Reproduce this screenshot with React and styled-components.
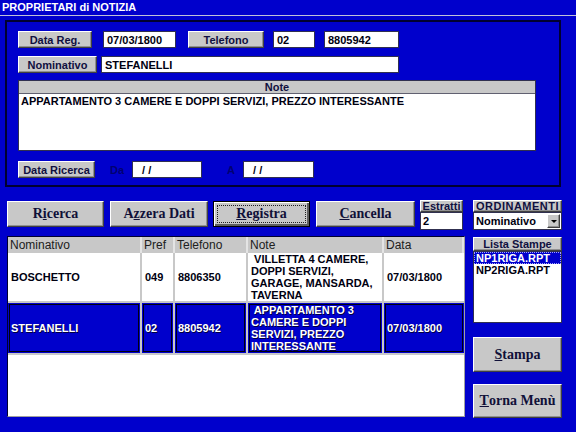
import styled, { createGlobalStyle, css } from "styled-components";

const BLUE = "#0000cc";
const GREY = "#c8c8c8";

const GlobalStyle = createGlobalStyle`
  html, body {
    margin: 0;
    padding: 0;
    background: ${BLUE};
  }
  body {
    width: 576px;
    height: 432px;
    overflow: hidden;
    font-family: "Liberation Sans", Arial, sans-serif;
  }
`;

const raised = css`
  border: 1px solid;
  border-color: #ffffff #404040 #404040 #ffffff;
  box-shadow: inset -1px -1px 0 #909090;
  background: ${GREY};
`;

const Window = styled.div`
  width: 576px;
  height: 432px;
  background: ${BLUE};
  display: flex;
  flex-direction: column;
`;

const TitleBar = styled.div`
  height: 15px;
  line-height: 15px;
  border-bottom: 1px solid #c0c0d8;
  padding-left: 2px;
  color: #ffffff;
  font-size: 11px;
  font-weight: bold;
`;

const Panel = styled.div`
  margin: 4px 0 0 5px;
  width: 556px;
  height: 167px;
  box-sizing: border-box;
  border: 2px solid #000030;
  padding: 9px 0 0 11px;
  display: flex;
  flex-direction: column;
`;

const Row = styled.div`
  display: flex;
  align-items: center;
  gap: ${(p) => p.$gap || 0}px;
  margin-top: ${(p) => p.$mt || 0}px;
`;

const LabelBox = styled.div`
  ${raised};
  box-sizing: border-box;
  width: ${(p) => p.$w}px;
  height: 17px;
  margin-left: ${(p) => p.$ml || 0}px;
  display: flex;
  align-items: center;
  justify-content: center;
  font-size: 11px;
  font-weight: bold;
  color: #101040;
  flex-shrink: 0;
`;

const Field = styled.div`
  box-sizing: border-box;
  width: ${(p) => p.$w}px;
  height: 17px;
  margin-left: ${(p) => p.$ml || 0}px;
  background: #ffffff;
  border: 1px solid #303050;
  padding-left: 3px;
  display: flex;
  align-items: center;
  font-size: 11px;
  font-weight: bold;
  color: #000010;
  white-space: pre;
  flex-shrink: 0;
`;

const Caption = styled.div`
  box-sizing: border-box;
  width: ${(p) => p.$w}px;
  padding-left: ${(p) => p.$pl}px;
  font-size: 11px;
  font-weight: bold;
  color: #000070;
`;

const NoteBox = styled.div`
  margin-top: 7px;
  width: 518px;
  height: 71px;
  box-sizing: border-box;
  background: #ffffff;
  border: 1px solid #303050;
  display: flex;
  flex-direction: column;
`;

const NoteHead = styled.div`
  height: 12px;
  line-height: 12px;
  background: ${GREY};
  border-bottom: 1px solid #606070;
  text-align: center;
  font-size: 11px;
  font-weight: bold;
  color: #101040;
`;

const NoteText = styled.div`
  padding: 1px 2px;
  font-size: 11px;
  font-weight: bold;
  color: #000010;
`;

const Main = styled.div`
  display: flex;
  gap: 8px;
  margin-top: 13px;
  padding-left: 7px;
`;

const LeftCol = styled.div`
  width: 458px;
  display: flex;
  flex-direction: column;
`;

const RightCol = styled.div`
  width: 89px;
  display: flex;
  flex-direction: column;
`;

const ButtonRow = styled.div`
  display: flex;
  align-items: flex-start;
  height: 29px;
`;

const Button = styled.div`
  ${raised};
  box-sizing: border-box;
  width: ${(p) => p.$w}px;
  height: ${(p) => p.$h || 26}px;
  margin-left: ${(p) => p.$ml || 0}px;
  margin-top: ${(p) => p.$mt || 0}px;
  display: flex;
  align-items: center;
  justify-content: center;
  font-family: "Liberation Serif", "Times New Roman", serif;
  font-size: 14px;
  font-weight: bold;
  color: #101038;
  position: relative;
  ${(p) =>
    p.$focused &&
    css`
      border-color: #000000;
      box-shadow: inset 1px 1px 0 #ffffff, inset -2px -2px 0 #606060;
      &::after {
        content: "";
        position: absolute;
        inset: 3px;
        border: 1px dotted #202020;
      }
    `}
`;

const Group = styled.div`
  width: ${(p) => p.$w}px;
  margin-left: ${(p) => p.$ml || 0}px;
  display: flex;
  flex-direction: column;
`;

const GroupHead = styled.div`
  ${raised};
  box-sizing: border-box;
  height: ${(p) => p.$h || 12}px;
  margin-top: ${(p) => p.$mt || 0}px;
  display: flex;
  align-items: center;
  justify-content: center;
  font-size: 11px;
  font-weight: bold;
  color: #101040;
  letter-spacing: ${(p) => p.$ls || 0}px;
`;

const SmallInput = styled.div`
  box-sizing: border-box;
  height: 18px;
  background: #ffffff;
  border: 1px solid #303050;
  padding-left: 2px;
  display: flex;
  align-items: center;
  justify-content: space-between;
  font-size: 11px;
  font-weight: bold;
  color: #000010;
`;

const DropButton = styled.div`
  ${raised};
  box-sizing: border-box;
  width: 13px;
  height: 14px;
  margin-right: 1px;
  display: flex;
  align-items: center;
  justify-content: center;

  &::before {
    content: "";
    border-left: 3px solid transparent;
    border-right: 3px solid transparent;
    border-top: 3px solid #000000;
  }
`;

const Table = styled.div`
  margin-top: 7px;
  height: 181px;
  box-sizing: border-box;
  background: #ffffff;
  border: 1px solid;
  border-color: #000030 #a0a0a0 #a0a0a0 #000030;
  display: grid;
  grid-template-columns: 134px 33px 73px 136px 80px;
  grid-template-rows: 16px 50px 52px;
  align-content: start;
`;

const HeadCell = styled.div`
  background: ${GREY};
  border-right: 2px solid #e4e4e4;
  display: flex;
  align-items: center;
  padding-left: 2px;
  font-size: 12px;
  color: #202020;
  &:last-child {
    border-right: none;
  }
`;

const Cell = styled.div`
  box-sizing: border-box;
  border-right: 2px solid ${GREY};
  border-bottom: 2px solid ${GREY};
  display: flex;
  align-items: center;
  padding-left: 3px;
  font-size: 11px;
  font-weight: bold;
  line-height: 12px;
  white-space: pre;
  color: ${(p) => (p.$selected ? "#ffffff" : "#000010")};
  background: ${(p) => (p.$selected ? BLUE : "#ffffff")};
  box-shadow: ${(p) =>
    p.$selected ? `inset 0 0 0 1px ${BLUE}, inset 0 0 0 2px #000010` : "none"};
  text-shadow: ${(p) => (p.$selected ? "1px 1px 0 #000040" : "none")};
  &:nth-child(5n) {
    border-right: none;
  }
`;

const ListBox = styled.div`
  height: 72px;
  box-sizing: border-box;
  background: #ffffff;
  border: 1px solid #303050;
  display: flex;
  flex-direction: column;
`;

const ListItem = styled.div`
  height: 12px;
  line-height: 12px;
  padding-left: 2px;
  font-size: 11px;
  font-weight: bold;
  color: ${(p) => (p.$selected ? "#ffffff" : "#000010")};
  background: ${(p) => (p.$selected ? BLUE : "transparent")};
  outline: ${(p) => (p.$selected ? "1px dotted #a0a0ff" : "none")};
  outline-offset: -1px;
`;

const rows = [
  {
    nome: "BOSCHETTO",
    pref: "049",
    tel: "8806350",
    note: [" VILLETTA 4 CAMERE,", "DOPPI SERVIZI,", "GARAGE, MANSARDA,", "TAVERNA"],
    data: "07/03/1800",
  },
  {
    nome: "STEFANELLI",
    pref: "02",
    tel: "8805942",
    note: [" APPARTAMENTO 3", "CAMERE E DOPPI", "SERVIZI, PREZZO", "INTERESSANTE"],
    data: "07/03/1800",
    selected: true,
  },
];

const App = () => {
  return (
    <Window>
      <GlobalStyle />
      <TitleBar>PROPRIETARI di NOTIZIA</TitleBar>
      <Panel>
        <Row>
          <LabelBox $w={74}>Data Reg.</LabelBox>
          <Field $w={73} $ml={11}>07/03/1800</Field>
          <LabelBox $w={76} $ml={12}>Telefono</LabelBox>
          <Field $w={42} $ml={9}>02</Field>
          <Field $w={75} $ml={9}>8805942</Field>
        </Row>
        <Row $mt={8}>
          <LabelBox $w={79}>Nominativo</LabelBox>
          <Field $w={298} $ml={4}>STEFANELLI</Field>
        </Row>
        <NoteBox>
          <NoteHead>Note</NoteHead>
          <NoteText>APPARTAMENTO 3 CAMERE E DOPPI SERVIZI, PREZZO INTERESSANTE</NoteText>
        </NoteBox>
        <Row $mt={10}>
          <LabelBox $w={77}>Data Ricerca</LabelBox>
          <Caption $w={37} $pl={15}>Da</Caption>
          <Field $w={70}>{"  / /"}</Field>
          <Caption $w={41} $pl={25}>A</Caption>
          <Field $w={71}>{"  / /"}</Field>
        </Row>
      </Panel>

      <Main>
        <LeftCol>
          <ButtonRow>
            <Button $w={97} $mt={1}>R<u>i</u>cerca</Button>
            <Button $w={98} $ml={6} $mt={1}>A<u>z</u>zera Dati</Button>
            <Button $w={97} $ml={5} $mt={1} $focused><u>R</u>egistra</Button>
            <Button $w={99} $ml={6} $mt={1}><u>C</u>ancella</Button>
            <Group $w={43} $ml={5}>
              <GroupHead $h={12}>Estratti</GroupHead>
              <SmallInput>2</SmallInput>
            </Group>
          </ButtonRow>
          <Table>
            <HeadCell>Nominativo</HeadCell>
            <HeadCell>Pref</HeadCell>
            <HeadCell>Telefono</HeadCell>
            <HeadCell>Note</HeadCell>
            <HeadCell>Data</HeadCell>
            {rows.map((r, i) => [
              <Cell key={`n${i}`} $selected={r.selected}>{r.nome}</Cell>,
              <Cell key={`p${i}`} $selected={r.selected}>{r.pref}</Cell>,
              <Cell key={`t${i}`} $selected={r.selected}>{r.tel}</Cell>,
              <Cell key={`o${i}`} $selected={r.selected}>{r.note.join("\n")}</Cell>,
              <Cell key={`d${i}`} $selected={r.selected}>{r.data}</Cell>,
            ])}
          </Table>
        </LeftCol>

        <RightCol>
          <GroupHead $h={12} $ls={0.5}>ORDINAMENTI</GroupHead>
          <SmallInput>
            Nominativo
            <DropButton />
          </SmallInput>
          <GroupHead $h={14} $mt={7}>Lista Stampe</GroupHead>
          <ListBox>
            <ListItem $selected>NP1RIGA.RPT</ListItem>
            <ListItem>NP2RIGA.RPT</ListItem>
          </ListBox>
          <Button $w={89} $h={35} $mt={14}><u>S</u>tampa</Button>
          <Button $w={89} $h={34} $mt={12}><u>T</u>orna Menù</Button>
        </RightCol>
      </Main>
    </Window>
  );
};

export default App;
